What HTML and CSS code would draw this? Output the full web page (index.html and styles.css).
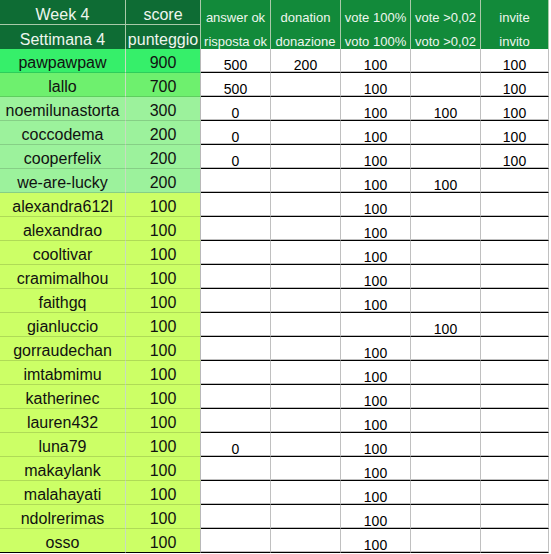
FILE: index.html
```html
<!DOCTYPE html>
<html>
<head>
<meta charset="utf-8">
<link rel="stylesheet" href="styles.css">
</head>
<body>
<table class="sheet">
  <colgroup>
    <col class="c-name"><col class="c-score"><col class="c-a"><col class="c-d"><col class="c-v"><col class="c-v2"><col class="c-i">
  </colgroup>
  <thead>
    <tr class="h1">
      <th class="hd">Week 4</th><th class="hd">score</th><th class="hs">answer ok</th><th class="hs">donation</th><th class="hs">vote 100%</th><th class="hs">vote &gt;0,02</th><th class="hs">invite</th>
    </tr>
    <tr class="h2">
      <th class="hd">Settimana 4</th><th class="hd">punteggio</th><th class="hs">risposta ok</th><th class="hs">donazione</th><th class="hs">voto 100%</th><th class="hs">voto &gt;0,02</th><th class="hs">invito</th>
    </tr>
  </thead>
  <tbody>
    <tr class="r-top"><td class="n">pawpawpaw</td><td class="s">900</td><td class="v">500</td><td class="v">200</td><td class="v">100</td><td class="v"></td><td class="v">100</td></tr>
    <tr class="r-second"><td class="n">lallo</td><td class="s">700</td><td class="v">500</td><td class="v"></td><td class="v">100</td><td class="v"></td><td class="v">100</td></tr>
    <tr class="r-light"><td class="n">noemilunastorta</td><td class="s">300</td><td class="v">0</td><td class="v"></td><td class="v">100</td><td class="v">100</td><td class="v">100</td></tr>
    <tr class="r-light"><td class="n">coccodema</td><td class="s">200</td><td class="v">0</td><td class="v"></td><td class="v">100</td><td class="v"></td><td class="v">100</td></tr>
    <tr class="r-light"><td class="n">cooperfelix</td><td class="s">200</td><td class="v">0</td><td class="v"></td><td class="v">100</td><td class="v"></td><td class="v">100</td></tr>
    <tr class="r-light"><td class="n">we-are-lucky</td><td class="s">200</td><td class="v"></td><td class="v"></td><td class="v">100</td><td class="v">100</td><td class="v"></td></tr>
    <tr class="r-base"><td class="n">alexandra612l</td><td class="s">100</td><td class="v"></td><td class="v"></td><td class="v">100</td><td class="v"></td><td class="v"></td></tr>
    <tr class="r-base"><td class="n">alexandrao</td><td class="s">100</td><td class="v"></td><td class="v"></td><td class="v">100</td><td class="v"></td><td class="v"></td></tr>
    <tr class="r-base"><td class="n">cooltivar</td><td class="s">100</td><td class="v"></td><td class="v"></td><td class="v">100</td><td class="v"></td><td class="v"></td></tr>
    <tr class="r-base"><td class="n">cramimalhou</td><td class="s">100</td><td class="v"></td><td class="v"></td><td class="v">100</td><td class="v"></td><td class="v"></td></tr>
    <tr class="r-base"><td class="n">faithgq</td><td class="s">100</td><td class="v"></td><td class="v"></td><td class="v">100</td><td class="v"></td><td class="v"></td></tr>
    <tr class="r-base"><td class="n">gianluccio</td><td class="s">100</td><td class="v"></td><td class="v"></td><td class="v"></td><td class="v">100</td><td class="v"></td></tr>
    <tr class="r-base"><td class="n">gorraudechan</td><td class="s">100</td><td class="v"></td><td class="v"></td><td class="v">100</td><td class="v"></td><td class="v"></td></tr>
    <tr class="r-base"><td class="n">imtabmimu</td><td class="s">100</td><td class="v"></td><td class="v"></td><td class="v">100</td><td class="v"></td><td class="v"></td></tr>
    <tr class="r-base"><td class="n">katherinec</td><td class="s">100</td><td class="v"></td><td class="v"></td><td class="v">100</td><td class="v"></td><td class="v"></td></tr>
    <tr class="r-base"><td class="n">lauren432</td><td class="s">100</td><td class="v"></td><td class="v"></td><td class="v">100</td><td class="v"></td><td class="v"></td></tr>
    <tr class="r-base"><td class="n">luna79</td><td class="s">100</td><td class="v">0</td><td class="v"></td><td class="v">100</td><td class="v"></td><td class="v"></td></tr>
    <tr class="r-base"><td class="n">makaylank</td><td class="s">100</td><td class="v"></td><td class="v"></td><td class="v">100</td><td class="v"></td><td class="v"></td></tr>
    <tr class="r-base"><td class="n">malahayati</td><td class="s">100</td><td class="v"></td><td class="v"></td><td class="v">100</td><td class="v"></td><td class="v"></td></tr>
    <tr class="r-base"><td class="n">ndolrerimas</td><td class="s">100</td><td class="v"></td><td class="v"></td><td class="v">100</td><td class="v"></td><td class="v"></td></tr>
    <tr class="r-base r-last"><td class="n">osso</td><td class="s">100</td><td class="v"></td><td class="v"></td><td class="v">100</td><td class="v"></td><td class="v"></td></tr>
  </tbody>
</table>
</body>
</html>
```
FILE: styles.css
```css
html, body {
  margin: 0;
  padding: 0;
  background: #ffffff;
}

.sheet {
  border-collapse: separate;
  border-spacing: 0;
  table-layout: fixed;
  width: 549px;
  font-family: "Liberation Sans", Arial, sans-serif;
  color: #000;
}

.c-name { width: 126px; }
.c-score { width: 75px; }
.c-a { width: 70px; }
.c-d { width: 70px; }
.c-v { width: 70px; }
.c-v2 { width: 70px; }
.c-i { width: 68px; }

th, td {
  box-sizing: border-box;
  padding: 0;
  text-align: center;
  vertical-align: bottom;
  white-space: nowrap;
}

th {
  font-weight: normal;
  color: #eef6ee;
  border-right: 1px solid #a9c9a9;
}

.h1 th { height: 25px; }
.h2 th { height: 24px; }

.hd {
  background: #0e6c34;
  font-size: 16px;
  line-height: 19px;
}

.h1 .hd {
  border-bottom: 1px solid #a9c9a9;
}

.hs {
  background: #128a3a;
  font-size: 13px;
  line-height: 15px;
}

td {
  height: 24px;
}

.v {
  font-size: 14px;
  line-height: 14px;
  background-color: #ffffff;
  border-right: 1px solid #c0c0c0;
  border-bottom: 1px solid #000000;
  box-shadow: inset 0 -1px 0 rgba(0, 0, 0, 0.25);
}

.n, .s {
  font-size: 16px;
  line-height: 19px;
  color: #111;
  border-bottom: 1px solid rgba(0, 0, 0, 0.14);
}

.n {
  border-right: 1px solid #c8dcc0;
}

.s {
  border-right: 1px solid #b8b8b8;
}

.r-top .n, .r-top .s { background-color: #36ef6a; }
.r-second .n, .r-second .s { background-color: #6ef06e; }
.r-light .n, .r-light .s { background-color: #9cf29c; }
.r-base .n, .r-base .s { background-color: #ccff66; }

.r-last .n, .r-last .s {
  border-bottom: 1px solid #000000;
}
```
